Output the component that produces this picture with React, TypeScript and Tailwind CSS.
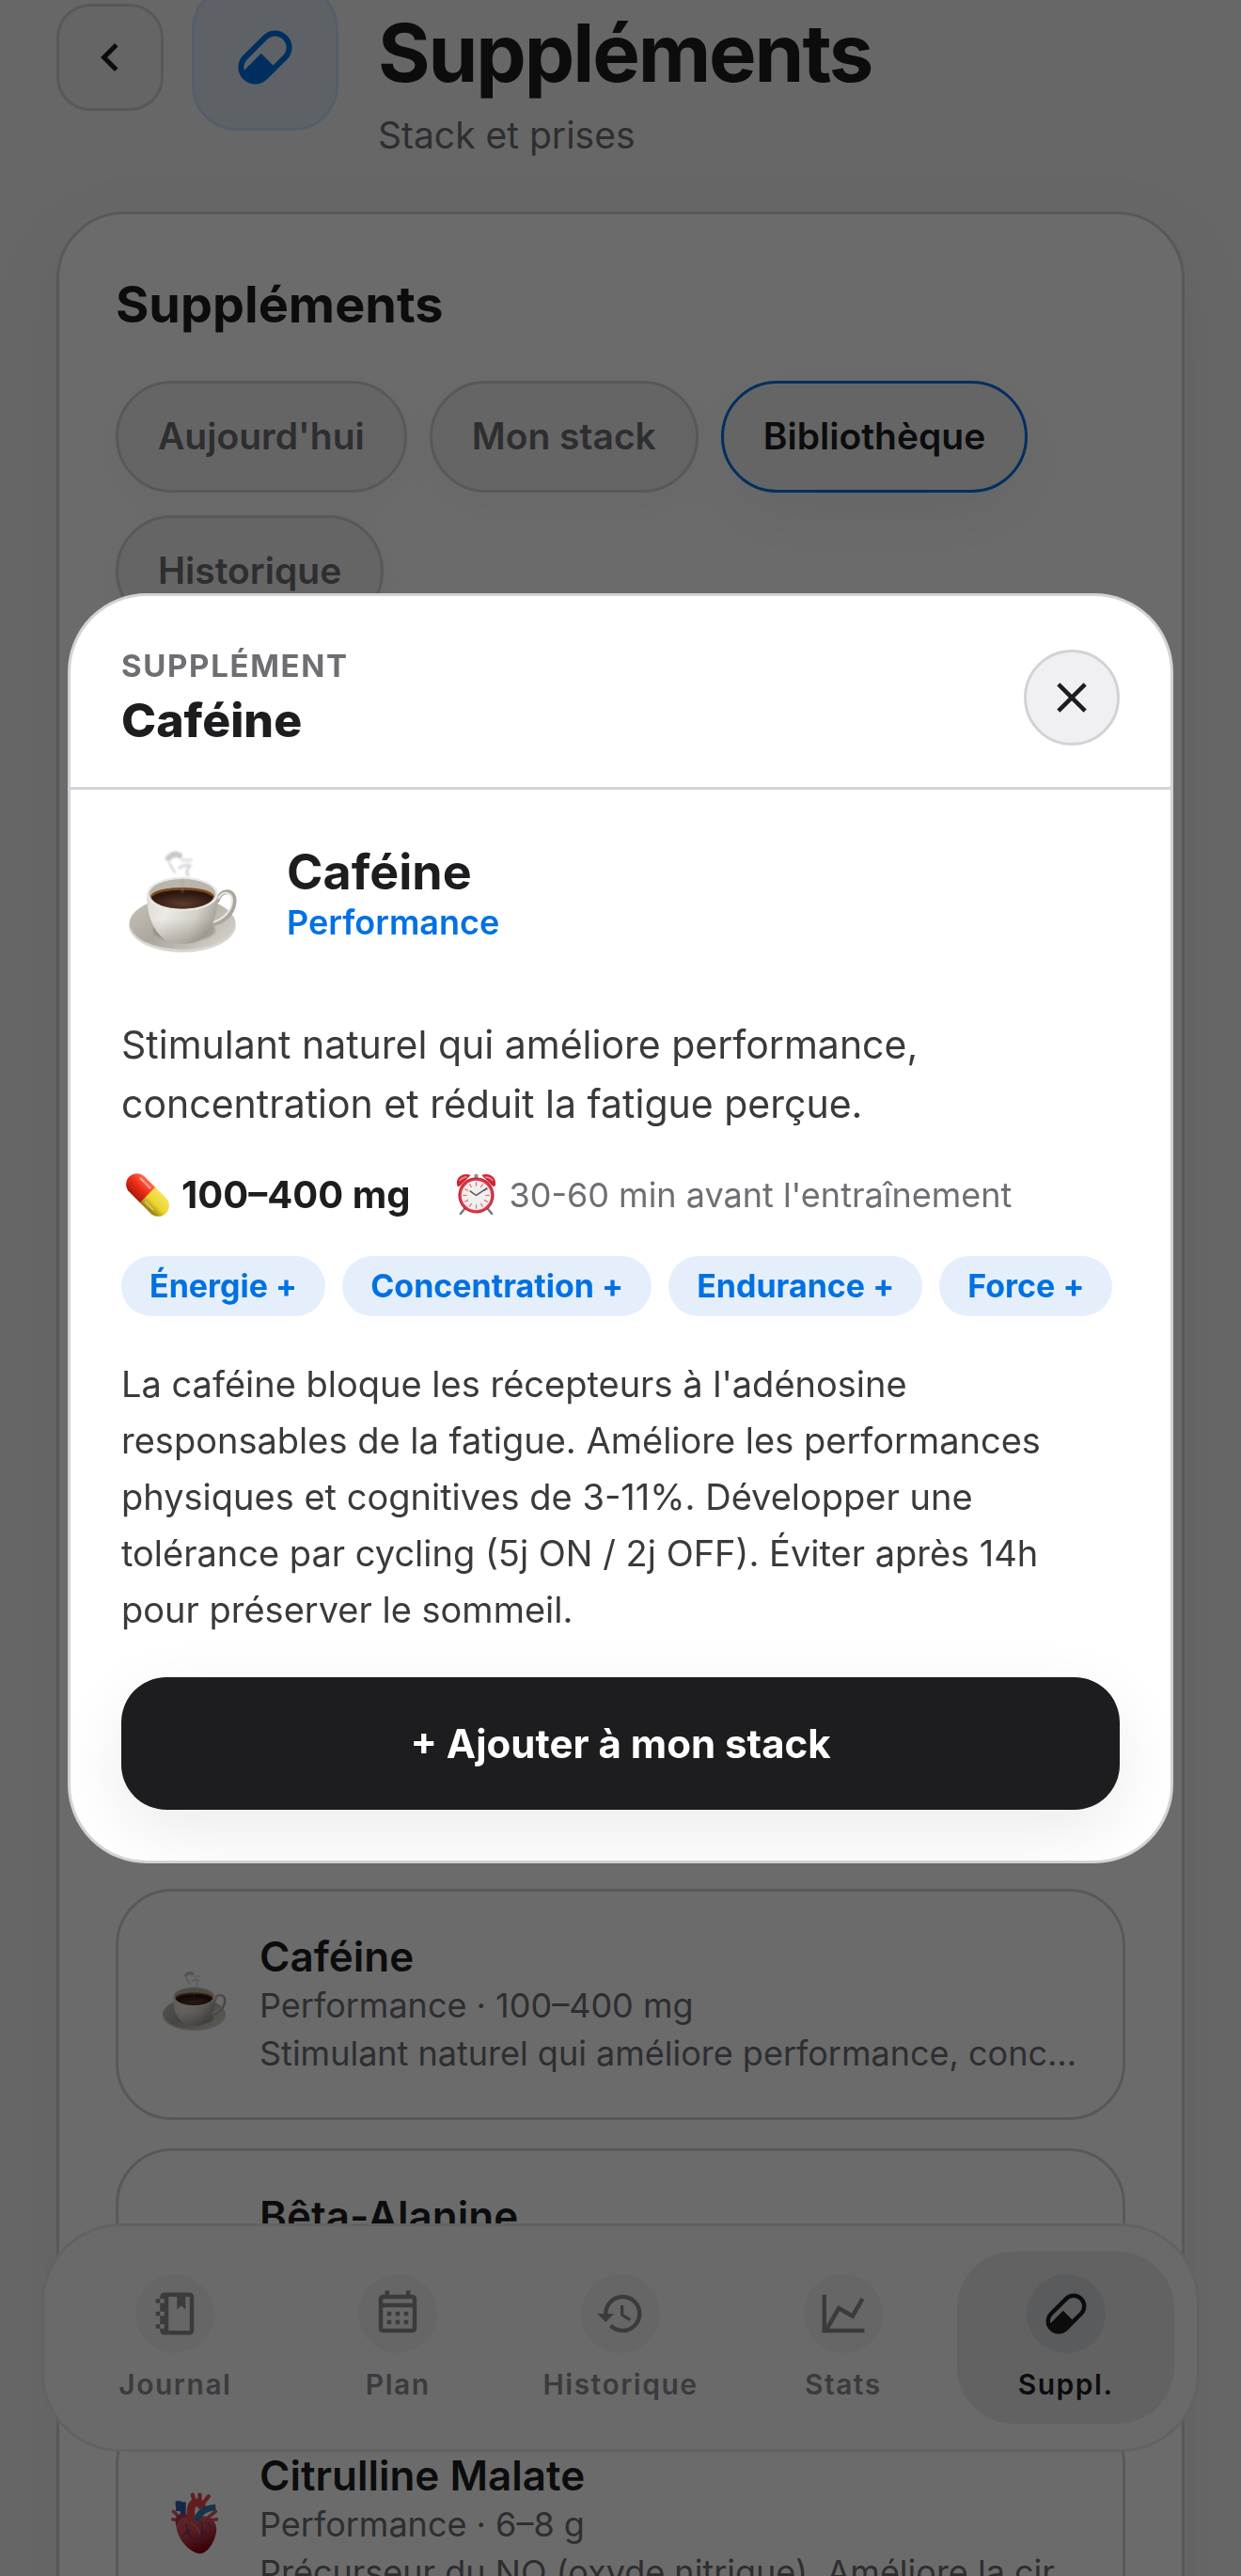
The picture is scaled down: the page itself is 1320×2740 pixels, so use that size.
import React from "react";

const PATHS = {
  pill: "M4.22,11.29L11.29,4.22C13.64,1.88 17.43,1.88 19.78,4.22C22.12,6.56 22.12,10.36 19.78,12.71L12.71,19.78C10.36,22.12 6.56,22.12 4.22,19.78C1.88,17.43 1.88,13.64 4.22,11.29M5.64,12.71C4.59,13.75 4.24,15.24 4.6,16.57L10.59,10.59L14.83,14.83L18.36,11.29C19.93,9.73 19.93,7.2 18.36,5.64C16.8,4.07 14.27,4.07 12.71,5.64L5.64,12.71Z",
  chevron: "M15.41,16.58L10.83,12L15.41,7.41L14,6L8,12L14,18L15.41,16.58Z",
  close:
    "M19,6.41L17.59,5L12,10.59L6.41,5L5,6.41L10.59,12L5,17.59L6.41,19L12,13.41L17.59,19L19,17.59L13.41,12L19,6.41Z",
  notebook:
    "M3,7V5H5V4A2,2 0 0,1 7,2H19A2,2 0 0,1 21,4V20A2,2 0 0,1 19,22H7A2,2 0 0,1 5,20V19H3V17H5V13H3V11H5V7H3M5,5V7H7V5H5M5,11V13H7V11H5M5,17V19H7V17H5M9,4V20H19V4H17V10L15,8.25L13,10V4H9Z",
  calendar:
    "M7 11H9V13H7V11M21 5V19C21 20.11 20.11 21 19 21H5C3.89 21 3 20.1 3 19V5C3 3.9 3.9 3 5 3H6V1H8V3H16V1H18V3H19C20.11 3 21 3.9 21 5M5 5V7H19V5H5M19 19V9H5V19H19M15 13V11H17V13H15M11 13V11H13V13H11M7 15H9V17H7V15M15 17V15H17V17H15M11 17V15H13V17H11Z",
  history:
    "M13.5,8H12V13L16.28,15.54L17,14.33L13.5,12.25V8M13,3A9,9 0 0,0 4,12H1L4.96,16.03L9,12H6A7,7 0 0,1 13,5A7,7 0 0,1 20,12A7,7 0 0,1 13,19C11.07,19 9.32,18.21 8.06,16.94L6.64,18.36C8.27,20 10.5,21 13,21A9,9 0 0,0 22,12A9,9 0 0,0 13,3",
  chart:
    "M16,11.78L20.24,4.45L21.97,5.45L16.74,14.5L10.23,10.75L5.46,19H22V21H2V3H4V17.54L9.5,8L16,11.78Z",
};

function Icon({ name, className }: { name: keyof typeof PATHS; className: string }) {
  return (
    <svg viewBox="0 0 24 24" fill="currentColor" fillRule="evenodd" aria-hidden="true" className={className}>
      <path d={PATHS[name]} />
    </svg>
  );
}

function Coffee({ className, viewBox }: { className: string; viewBox: string }) {
  const id = React.useId();
  return (
    <svg viewBox={viewBox} aria-hidden="true" className={className}>
      <defs>
        <linearGradient id={id + "cup"} x1="0" x2="1" y1="0" y2="0.3">
          <stop offset="0" stopColor="#dddad2" />
          <stop offset="0.35" stopColor="#edebe6" />
          <stop offset="0.75" stopColor="#d3d0c8" />
          <stop offset="1" stopColor="#a9a59b" />
        </linearGradient>
        <linearGradient id={id + "shade"} x1="0" x2="0" y1="0" y2="1">
          <stop offset="0.5" stopColor="#6d675c" stopOpacity="0" />
          <stop offset="1" stopColor="#6d675c" stopOpacity="0.4" />
        </linearGradient>
        <linearGradient id={id + "saucer"} x1="0" x2="1" y1="0" y2="0.6">
          <stop offset="0" stopColor="#c9c6bf" />
          <stop offset="0.5" stopColor="#aaa69c" />
          <stop offset="1" stopColor="#cfccc4" />
        </linearGradient>
        <radialGradient id={id + "brew"} cx="0.5" cy="0.75" r="0.6">
          <stop offset="0" stopColor="#5b3b2e" />
          <stop offset="1" stopColor="#2c1610" />
        </radialGradient>
        <filter id={id + "soft"} x="-50%" y="-50%" width="200%" height="200%">
          <feGaussianBlur stdDeviation="1.2" />
        </filter>
      </defs>
      <ellipse cx="65" cy="93" rx="57" ry="29" fill="#d8d6d0" />
      <ellipse cx="65" cy="91" rx="56" ry="28" fill={`url(#${id}saucer)`} />
      <ellipse cx="67" cy="98" rx="33" ry="13" fill="#837e73" opacity="0.55" filter={`url(#${id}soft)`} />
      <path
        d="M102 67C106 54 121 55 120 68C119 82 107 91 94 92"
        fill="none"
        stroke="#a9a69e"
        strokeWidth="5"
        strokeLinecap="round"
      />
      <path d="M103 65C108 55 119 58 118 68C117 79 108 87 97 90" fill="none" stroke="#e9e7e2" strokeWidth="2" />
      <path d="M27 60C27 84 36 107 55 112Q65 114 76 112C94 107 103 84 103 60Z" fill={`url(#${id}cup)`} />
      <path d="M27 60C27 84 36 107 55 112Q65 114 76 112C94 107 103 84 103 60Z" fill={`url(#${id}shade)`} />
      <ellipse cx="65" cy="60" rx="38" ry="18" fill="#eae8e3" />
      <ellipse cx="65" cy="60" rx="35.5" ry="16" fill="#b9b5ac" />
      <path d="M31 62C36 50 94 50 99 62C93 80 37 80 31 62Z" fill="#7b4a1b" />
      <path d="M32 64C38 53 92 53 98 64C91 79 39 79 32 64Z" fill={`url(#${id}brew)`} />
      <g fill="none" stroke="#9a9a9a" strokeLinecap="round" filter={`url(#${id}soft)`}>
        <path d="M50 22Q56 15 62 19" strokeWidth="6" opacity="0.55" />
        <path d="M51 27Q54 32 57 37" strokeWidth="2" opacity="0.5" />
        <path d="M65 24H74" strokeWidth="4" opacity="0.25" />
        <path d="M62 32Q68 28 73 30Q68 35 71 40" strokeWidth="3" opacity="0.4" />
        <path d="M65 44V58" strokeWidth="2" opacity="0.4" />
      </g>
    </svg>
  );
}

function Capsule({ className }: { className: string }) {
  const id = React.useId();
  return (
    <svg viewBox="0 0 54 54" aria-hidden="true" className={className}>
      <defs>
        <linearGradient id={id + "r"} x1="0" x2="0" y1="0" y2="1">
          <stop offset="0" stopColor="#ff6a4a" />
          <stop offset="0.5" stopColor="#ee2c18" />
          <stop offset="1" stopColor="#a8190c" />
        </linearGradient>
        <linearGradient id={id + "y"} x1="0" x2="0" y1="0" y2="1">
          <stop offset="0" stopColor="#f5e455" />
          <stop offset="0.55" stopColor="#ead62e" />
          <stop offset="1" stopColor="#98780c" />
        </linearGradient>
      </defs>
      <g transform="rotate(45 27 27)">
        <path d="M28 14H9A13 13 0 0 0 9 40H28Z" fill={`url(#${id}r)`} />
        <path d="M27 14H45A13 13 0 0 1 45 40H27Z" fill={`url(#${id}y)`} />
        <path d="M7 19H23" stroke="#fff" strokeOpacity="0.45" strokeWidth="2.5" strokeLinecap="round" />
        <path d="M31 35H44" stroke="#fff" strokeOpacity="0.4" strokeWidth="2" strokeLinecap="round" />
      </g>
    </svg>
  );
}

function AlarmClock({ className }: { className: string }) {
  return (
    <svg viewBox="2 2 44 46" aria-hidden="true" className={className}>
      <path d="M11 41L7 46M37 41L41 46" stroke="#77797c" strokeWidth="2.5" strokeLinecap="round" />
      <path d="M24 3V8" stroke="#8b8d90" strokeWidth="4" />
      <path d="M3 14C2 5 11 1 18 4L6 16Q3 17 3 14Z" fill="#cf2738" />
      <path d="M45 14C46 5 37 1 30 4L42 16Q45 17 45 14Z" fill="#cf2738" />
      <path d="M6 10Q9 6 14 6M34 6Q39 6 42 10" fill="none" stroke="#f6929a" strokeWidth="1.5" />
      <circle cx="24" cy="26" r="19.5" fill="#b91f30" />
      <circle cx="24" cy="26" r="18.5" fill="#d83a49" />
      <circle cx="24" cy="26" r="16" fill="#f0f0ee" />
      <g stroke="#e46a72" strokeWidth="1.2">
        {[0, 30, 60, 90, 120, 150, 180, 210, 240, 270, 300, 330].map((a) => (
          <path key={a} d="M24 11.5V16" transform={`rotate(${a} 24 26)`} />
        ))}
      </g>
      <path d="M17 21L24 26L36 18" fill="none" stroke="#555" strokeWidth="1.5" />
    </svg>
  );
}

function Heart({ className }: { className: string }) {
  const id = React.useId();
  return (
    <svg viewBox="0 0 60 78" aria-hidden="true" className={className}>
      <defs>
        <linearGradient id={id} x1="0" x2="0.4" y1="0" y2="1">
          <stop offset="0" stopColor="#e0626c" />
          <stop offset="0.5" stopColor="#cc4450" />
          <stop offset="1" stopColor="#8c0714" />
        </linearGradient>
      </defs>
      <path d="M15 36V12M9 17V11M6 20H16" fill="none" stroke="#2c5ea8" strokeWidth="7" />
      <path d="M3 24L10 31M2 34L10 35M56 24L46 32M58 34L46 35" stroke="#d9545f" strokeWidth="4" strokeLinecap="round" />
      <path d="M6 32Q14 22 26 32L20 52L9 48Q4 40 6 32Z" fill="#b83a58" />
      <path d="M7 46C5 34 18 28 29 32C42 26 58 32 57 48C55 64 45 77 37 77C26 77 10 62 7 46Z" fill={`url(#${id})`} />
      <path d="M26 36C22 16 28 12 34 13Q39 14 39 21" fill="none" stroke="#e8484a" strokeWidth="10" />
      <path d="M29 11L27 3M36 11V3M41 13L47 5" stroke="#e8484a" strokeWidth="5" strokeLinecap="round" />
      <path d="M32 36Q36 20 56 19" fill="none" stroke="#3877b4" strokeWidth="8" />
      <path
        d="M19 40Q20 52 28 60M24 47L15 54M38 37Q42 50 36 64M40 48L49 56M38 56L32 62M46 38L50 45"
        fill="none"
        stroke="#5a3b7a"
        strokeWidth="1.4"
      />
      <path d="M25 38Q33 42 36 52" fill="none" stroke="#f08a8e" strokeWidth="2" opacity="0.6" />
    </svg>
  );
}

const tabs = ["Aujourd'hui", "Mon stack", "Bibliothèque", "Historique"];

const supplements = [
  {
    name: "Caféine",
    meta: "Performance · 100–400 mg",
    text: "Stimulant naturel qui améliore performance, concentration et réduit la fatigue perçue.",
    art: <Coffee viewBox="0 8 132 132" className="size-[78px] shrink-0" />,
  },
  { name: "Bêta-Alanine", meta: "Performance", text: "", art: <span className="size-[78px] shrink-0" /> },
  {
    name: "Citrulline Malate",
    meta: "Performance · 6–8 g",
    text: "Précurseur du NO (oxyde nitrique). Améliore la circulation sanguine et la congestion.",
    art: (
      <span className="flex size-[78px] shrink-0 items-center justify-center">
        <Heart className="h-[66px]" />
      </span>
    ),
  },
];

const navItems: { label: string; icon: keyof typeof PATHS }[] = [
  { label: "Journal", icon: "notebook" },
  { label: "Plan", icon: "calendar" },
  { label: "Historique", icon: "history" },
  { label: "Stats", icon: "chart" },
  { label: "Suppl.", icon: "pill" },
];

function PageContent() {
  return (
    <main className="-mt-[51px] px-[60px]">
      <header className="flex items-center">
        <button
          type="button"
          aria-label="Retour"
          className="flex size-[114px] items-center justify-center rounded-[36px] border-3 border-[#d2d2d7] bg-[#f0f0f3]"
        >
          <Icon name="chevron" className="size-[60px]" />
        </button>
        <div className="ml-[30px] flex size-[156px] items-center justify-center rounded-[48px] border-3 border-[#cbdff7] bg-[#dfe9f6] text-[#0071e3]">
          <Icon name="pill" className="size-[72px]" />
        </div>
        <div className="ml-[42px] pt-[63px]">
          <h1 className="text-[85px] leading-[90px] font-bold tracking-tight">Suppléments</h1>
          <p className="pt-[13px] text-[39px] leading-[58px] text-[#6e6e73]">Stack et prises</p>
        </div>
      </header>

      <section className="mt-[52px] rounded-[72px] border-3 border-[#d2d2d7] bg-white p-[60px] shadow-[0_24px_90px_rgba(0,0,0,0.06)]">
        <h2 className="text-[54px] leading-[72px] font-bold">Suppléments</h2>
        <div className="mt-[45px] flex flex-wrap gap-6">
          {tabs.map((tab) => (
            <button
              key={tab}
              type="button"
              className={
                tab === "Bibliothèque"
                  ? "h-[119px] rounded-full border-3 border-[#0071e3] bg-[#f0f0f3] px-[42px] text-[39px] font-semibold shadow-[0_24px_72px_rgba(0,0,0,0.06)]"
                  : "h-[119px] rounded-full border-3 border-[#d2d2d7] bg-[#f0f0f3] px-[42px] text-[39px] font-semibold text-[#6e6e73] shadow-[0_12px_48px_rgba(0,0,0,0.04)]"
              }
            >
              {tab}
            </button>
          ))}
        </div>
        <ul className="mt-[1342px] flex flex-col gap-[30px]">
          {supplements.map((s) => (
            <li key={s.name}>
              <button
                type="button"
                className="flex w-full items-center gap-[30px] rounded-[60px] border-3 border-[#d2d2d7] py-[42px] pr-9 pl-[42px] text-left"
              >
                {s.art}
                <span className="min-w-0 flex-1">
                  <span className="block text-[44px] leading-[54px] font-semibold">{s.name}</span>
                  <span className="block text-[36px] leading-[51px] text-[#6e6e73]">{s.meta}</span>
                  <span className="block h-[51px] truncate text-[36px] leading-[51px] text-[#6e6e73]">{s.text}</span>
                </span>
              </button>
            </li>
          ))}
        </ul>
      </section>
    </main>
  );
}

function BottomNav() {
  return (
    <nav className="fixed inset-x-[44px] bottom-[132px] flex gap-1.5 rounded-[84px] border-3 border-[#e9e9ec] bg-[#fcfcfc] px-6 py-[27px] text-[30px] leading-9 font-semibold tracking-wider">
      {navItems.map(({ label, icon }) => (
        <a
          key={label}
          href="#"
          className={
            icon === "pill"
              ? "flex min-w-0 flex-1 flex-col items-center rounded-[60px] bg-[#e9eaeb] py-6"
              : "flex min-w-0 flex-1 flex-col items-center rounded-[60px] py-6 text-[#8e8e93]"
          }
        >
          <span
            className={
              icon === "pill"
                ? "flex size-[84px] items-center justify-center rounded-full bg-[#d7d8db]"
                : "flex size-[84px] items-center justify-center rounded-full bg-[#f3f3f4]"
            }
          >
            <Icon name={icon} className="size-[54px]" />
          </span>
          <span className="mt-[15px]">{label}</span>
        </a>
      ))}
    </nav>
  );
}

function SupplementDialog() {
  return (
    <div className="fixed inset-0 flex items-center justify-center bg-black/58 px-[72px] pb-32">
      <div
        role="dialog"
        aria-modal="true"
        aria-labelledby="dialog-title"
        className="w-full overflow-hidden rounded-[84px] border-3 border-[#d2d2d7] bg-white"
      >
        <div className="flex items-center justify-between border-b-3 border-[#d2d2d7] px-[54px] pt-[54px] pb-[41px]">
          <div>
            <p className="text-[33px] leading-10 font-bold tracking-wider text-[#6e6e73]">SUPPLÉMENT</p>
            <h2 id="dialog-title" className="mt-2 text-[50px] leading-[60px] font-extrabold">
              Caféine
            </h2>
          </div>
          <button
            type="button"
            aria-label="Fermer"
            className="flex size-[102px] items-center justify-center rounded-full border-3 border-[#d2d2d7] bg-[#f0f0f3]"
          >
            <Icon name="close" className="size-[54px]" />
          </button>
        </div>

        <div className="px-[54px] pt-[44px] pb-[54px]">
          <div className="flex items-center gap-[44px]">
            <Coffee viewBox="0 -7 132 132" className="size-[132px]" />
            <div>
              <h3 className="text-[52px] leading-[62px] font-bold">Caféine</h3>
              <p className="text-[36px] leading-[44px] font-semibold text-[#0071e3]">Performance</p>
            </div>
          </div>
          <p className="mt-16 text-[41px] leading-[63px] text-[#3a3a3c]">
            Stimulant naturel qui améliore performance, concentration et réduit la fatigue perçue.
          </p>
          <div className="mt-9 flex items-center gap-12 leading-[58px]">
            <span className="flex items-center gap-3 pl-1 text-[40px] font-bold">
              <Capsule className="size-[48px]" />
              100–400 mg
            </span>
            <span className="flex items-center gap-3 text-[36px] text-[#6e6e73]">
              <AlarmClock className="size-[45px]" />
              30-60 min avant l'entraînement
            </span>
          </div>
          <ul className="mt-9 flex flex-wrap gap-[18px]">
            {["Énergie +", "Concentration +", "Endurance +", "Force +"].map((c) => (
              <li
                key={c}
                className="rounded-full bg-[#e5effc] px-[30px] text-[34px] leading-[64px] font-bold text-[#0071e3]"
              >
                {c}
              </li>
            ))}
          </ul>
          <p className="mt-[42px] text-[38px] leading-[60px] text-[#3a3a3c]">
            La caféine bloque les récepteurs à l'adénosine responsables de la fatigue. Améliore les performances
            physiques et cognitives de 3-11%. Développer une tolérance par cycling (5j ON / 2j OFF). Éviter après 14h
            pour préserver le sommeil.
          </p>
          <button
            type="button"
            className="mt-[42px] h-[141px] w-full rounded-[48px] bg-[#1d1d1f] text-[42px] font-bold text-white shadow-[0_24px_72px_rgba(0,0,0,0.08)]"
          >
            + Ajouter à mon stack
          </button>
        </div>
      </div>
    </div>
  );
}

export default function App() {
  return (
    <div className="h-screen overflow-hidden bg-[#f5f5f7] font-['Inter',sans-serif] text-[#1d1d1f]">
      <PageContent />
      <BottomNav />
      <SupplementDialog />
    </div>
  );
}
